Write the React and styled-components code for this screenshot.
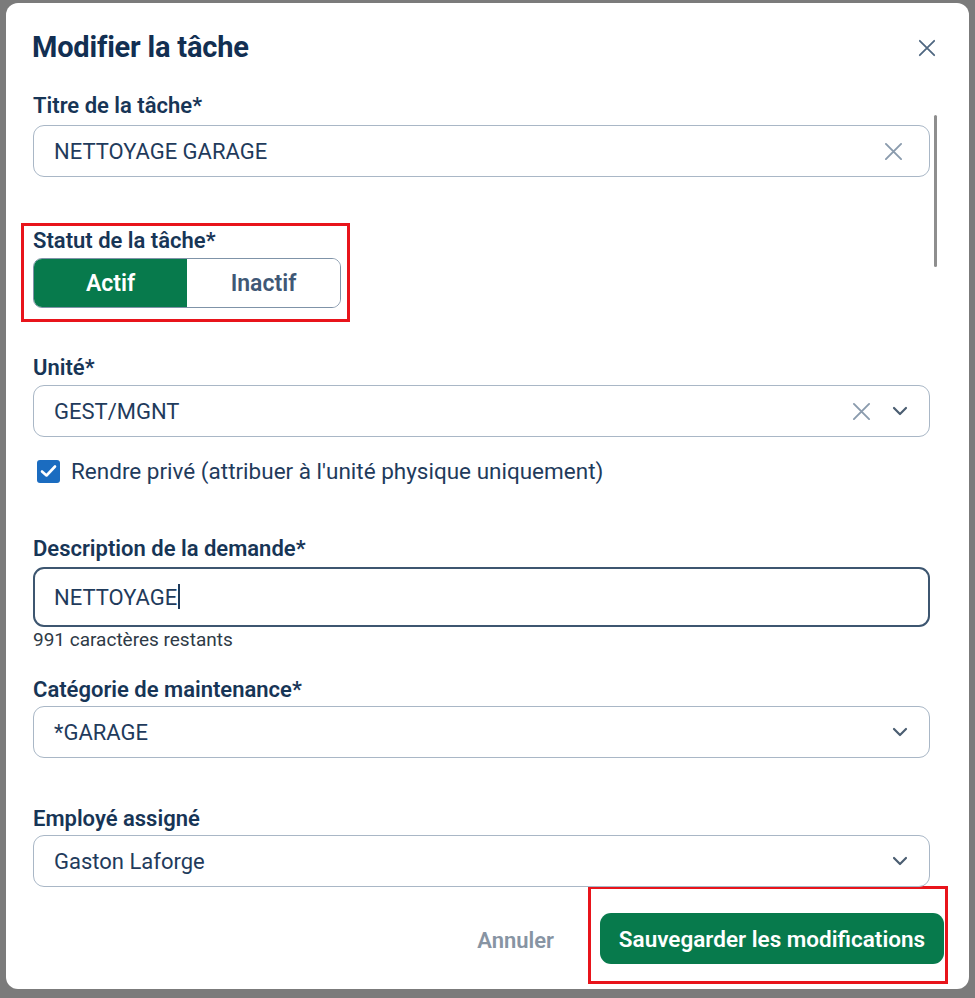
import React from "react";
import styled, { createGlobalStyle } from "styled-components";

const Global = createGlobalStyle`
  html, body { margin: 0; padding: 0; }
  body {
    background: #7b7b7b;
    font-family: Roboto, "Noto Sans", Arial, sans-serif;
    width: 975px;
    height: 998px;
    overflow: hidden;
  }
  * { box-sizing: border-box; }
`;

const Backdrop = styled.div`
  width: 975px;
  height: 998px;
  padding: 3px 0 0 6px;
`;

const Modal = styled.div`
  position: relative;
  width: 963px;
  height: 986px;
  background: #ffffff;
  border-radius: 12px;
  display: flex;
  flex-direction: column;
  overflow: hidden;
`;

const Header = styled.div`
  display: flex;
  align-items: flex-start;
  justify-content: space-between;
  padding: 26px 31px 0 26px;
  height: 90px;
  flex-shrink: 0;
`;

const Title = styled.h2`
  margin: 0;
  font-size: 29px;
  line-height: 36px;
  font-weight: 700;
  color: #122f52;
  letter-spacing: -0.2px;
`;

const IconButton = styled.button`
  border: none;
  background: none;
  padding: 0;
  margin-top: 8px;
  width: 22px;
  height: 22px;
  display: flex;
  align-items: center;
  justify-content: center;
  color: #4f6781;
`;

const Body = styled.div`
  position: relative;
  flex: 1;
  min-height: 0;
  padding: 0 39px 0 27px;
  display: flex;
  flex-direction: column;
`;

const ScrollThumb = styled.div`
  position: absolute;
  right: 32px;
  top: 22px;
  width: 3px;
  height: 152px;
  background: #8e8e8e;
  border-radius: 2px;
`;

const Group = styled.div`
  display: flex;
  flex-direction: column;
  margin-top: ${(p) => p.$mt || 0}px;
`;

const Label = styled.label`
  font-size: 22px;
  line-height: 26px;
  font-weight: 600;
  color: #173556;
  margin-bottom: ${(p) => p.$mb ?? 6}px;
`;

const Field = styled.div`
  height: ${(p) => p.$h || 52}px;
  border: ${(p) => (p.$focused ? "2px solid #3d5670" : "1.5px solid #a9b7c6")};
  border-radius: 11px;
  display: flex;
  align-items: center;
  padding: 0 21px 0 ${(p) => (p.$focused ? 19 : 20)}px;
  gap: 21px;
  background: #fff;
`;

const FieldText = styled.span`
  flex: 1;
  font-size: 22px;
  color: #1f3b5c;
  white-space: nowrap;
`;

const Caret = styled.span`
  display: inline-block;
  width: 1.5px;
  height: 25px;
  background: #1f3b5c;
  vertical-align: -4px;
  margin-left: 1px;
`;

const FieldIcon = styled.span`
  display: flex;
  align-items: center;
  color: ${(p) => p.$color || "#8a9bad"};
  margin-right: ${(p) => p.$mr || 0}px;
`;

const Highlight = styled.div`
  border: 3px solid #e8141b;
  margin: ${(p) => p.$m};
  padding: ${(p) => p.$p};
  width: ${(p) => p.$w || "auto"};
  display: flex;
  flex-direction: column;
`;

const Toggle = styled.div`
  display: flex;
  width: 308px;
  height: 50px;
  border: 1.5px solid #7f93a8;
  border-radius: 9px;
  overflow: hidden;
`;

const ToggleOption = styled.button`
  flex: 1;
  border: none;
  font-family: inherit;
  font-size: 23px;
  font-weight: 600;
  background: ${(p) => (p.$active ? "#077a4c" : "#ffffff")};
  color: ${(p) => (p.$active ? "#ffffff" : "#3f5876")};
  padding: 0;
`;

const CheckRow = styled.div`
  display: flex;
  align-items: center;
  gap: 11px;
  margin-top: 21px;
  padding-left: 4px;
`;

const CheckBox = styled.span`
  width: 23px;
  height: 23px;
  border-radius: 3px;
  background: #1b6cc0;
  display: flex;
  align-items: center;
  justify-content: center;
`;

const CheckText = styled.span`
  font-size: 22.5px;
  color: #1f3b5c;
`;

const Helper = styled.div`
  font-size: 19px;
  line-height: 24px;
  color: #2e3a46;
  margin-top: 1px;
`;

const Footer = styled.div`
  display: flex;
  align-items: flex-start;
  justify-content: flex-end;
  padding: 0 21px 5px 0;
  flex-shrink: 0;
`;

const CancelButton = styled.button`
  border: none;
  background: none;
  font-family: inherit;
  font-size: 22px;
  font-weight: 600;
  color: #8794a3;
  height: 51px;
  margin: 29px 34px 0 0;
  padding: 0;
`;

const SaveButton = styled.button`
  border: none;
  background: #077a4c;
  color: #fff;
  font-family: inherit;
  font-size: 22.5px;
  font-weight: 600;
  height: 51px;
  width: 344px;
  border-radius: 11px;
  padding: 0;
`;

const Close = ({ size = 20, stroke = 2 }) => (
  <svg width={size} height={size} viewBox="0 0 20 20" fill="none" stroke="currentColor" strokeWidth={stroke} strokeLinecap="round">
    <path d="M2 2 L18 18 M18 2 L2 18" />
  </svg>
);

const Chevron = () => (
  <svg width="16" height="10" viewBox="0 0 16 10" fill="none" stroke="currentColor" strokeWidth="2.2" strokeLinecap="round" strokeLinejoin="round">
    <path d="M2 2 L8 8 L14 2" />
  </svg>
);

const Check = () => (
  <svg width="17" height="14" viewBox="0 0 17 14" fill="none" stroke="#fff" strokeWidth="2.6" strokeLinecap="round" strokeLinejoin="round">
    <path d="M2 7.5 L6.5 11.5 L15 2.5" />
  </svg>
);

export default function App() {
  return (
    <>
      <Global />
      <Backdrop>
        <Modal>
          <Header>
            <Title>Modifier la tâche</Title>
            <IconButton aria-label="Fermer">
              <Close size={18} stroke={2} />
            </IconButton>
          </Header>
          <Body>
            <ScrollThumb />
            <Group>
              <Label>Titre de la tâche*</Label>
              <Field>
                <FieldText>NETTOYAGE GARAGE</FieldText>
                <FieldIcon $mr={5}><Close size={19} stroke={2} /></FieldIcon>
              </Field>
            </Group>

            <Highlight $m="46px 0 0 -12px" $p="2px 6px 11px 9px" $w="329px">
              <Label $mb={4}>Statut de la tâche*</Label>
              <Toggle>
                <ToggleOption $active>Actif</ToggleOption>
                <ToggleOption>Inactif</ToggleOption>
              </Toggle>
            </Highlight>

            <Group $mt={33}>
              <Label $mb={4}>Unité*</Label>
              <Field>
                <FieldText>GEST/MGNT</FieldText>
                <FieldIcon><Close size={19} stroke={2} /></FieldIcon>
                <FieldIcon $color="#4b5e72"><Chevron /></FieldIcon>
              </Field>
            </Group>

            <CheckRow>
              <CheckBox><Check /></CheckBox>
              <CheckText>Rendre privé (attribuer à l'unité physique uniquement)</CheckText>
            </CheckRow>

            <Group $mt={52}>
              <Label $mb={5}>Description de la demande*</Label>
              <Field $focused $h={60}>
                <FieldText>NETTOYAGE<Caret /></FieldText>
              </Field>
              <Helper>991 caractères restants</Helper>
            </Group>

            <Group $mt={25}>
              <Label $mb={3}>Catégorie de maintenance*</Label>
              <Field>
                <FieldText>*GARAGE</FieldText>
                <FieldIcon $color="#4b5e72"><Chevron /></FieldIcon>
              </Field>
            </Group>

            <Group $mt={48}>
              <Label $mb={3}>Employé assigné</Label>
              <Field>
                <FieldText>Gaston Laforge</FieldText>
                <FieldIcon $color="#4b5e72"><Chevron /></FieldIcon>
              </Field>
            </Group>
          </Body>
          <Footer>
            <CancelButton>Annuler</CancelButton>
            <Highlight $m="0" $p="24px 1px 17px 9px">
              <SaveButton>Sauvegarder les modifications</SaveButton>
            </Highlight>
          </Footer>
        </Modal>
      </Backdrop>
    </>
  );
}
